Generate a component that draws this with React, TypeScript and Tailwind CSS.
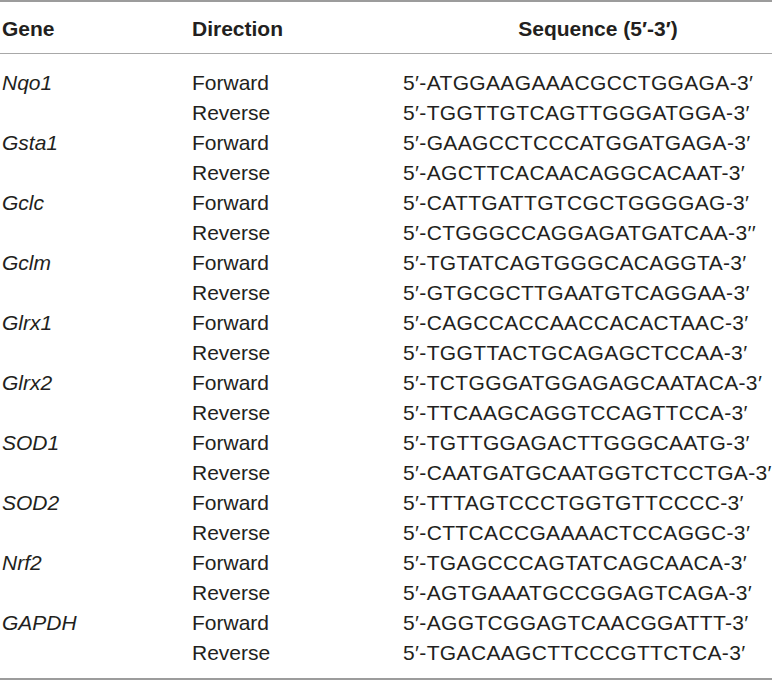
const rows: [string, string, string][] = [
	['Nqo1', '5′-ATGGAAGAAACGCCTGGAGA-3′', '5′-TGGTTGTCAGTTGGGATGGA-3′'],
	['Gsta1', '5′-GAAGCCTCCCATGGATGAGA-3′', '5′-AGCTTCACAACAGGCACAAT-3′'],
	['Gclc', '5′-CATTGATTGTCGCTGGGGAG-3′', '5′-CTGGGCCAGGAGATGATCAA-3′′'],
	['Gclm', '5′-TGTATCAGTGGGCACAGGTA-3′', '5′-GTGCGCTTGAATGTCAGGAA-3′'],
	['Glrx1', '5′-CAGCCACCAACCACACTAAC-3′', '5′-TGGTTACTGCAGAGCTCCAA-3′'],
	['Glrx2', '5′-TCTGGGATGGAGAGCAATACA-3′', '5′-TTCAAGCAGGTCCAGTTCCA-3′'],
	['SOD1', '5′-TGTTGGAGACTTGGGCAATG-3′', '5′-CAATGATGCAATGGTCTCCTGA-3′'],
	['SOD2', '5′-TTTAGTCCCTGGTGTTCCCC-3′', '5′-CTTCACCGAAAACTCCAGGC-3′'],
	['Nrf2', '5′-TGAGCCCAGTATCAGCAACA-3′', '5′-AGTGAAATGCCGGAGTCAGA-3′'],
	['GAPDH', '5′-AGGTCGGAGTCAACGGATTT-3′', '5′-TGACAAGCTTCCCGTTCTCA-3′'],
]

export default function App() {
	return (
		<div className="h-[681px] w-[772px] bg-white font-['Liberation_Sans',Arial,sans-serif] text-[21px] text-[#231f20]">
			<div className="border-t-2 border-b-2 border-[#9c9c9c]">
				<div className="grid h-[52px] grid-cols-[190px_211px_1fr] items-center border-b border-[#a8a8a8] pt-[3px] pl-[2px] font-bold">
					<div>Gene</div>
					<div>Direction</div>
					<div className="pl-[21px] text-center">Sequence (5′-3′)</div>
				</div>
				<div className="pt-[13px] pb-[11px]">
					{rows.map(([gene, fwd, rev]) => (
						<div key={gene}>
							<div className="grid h-[30px] grid-cols-[190px_211px_1fr] items-center pl-[2px]">
								<div className="italic">{gene}</div>
								<div>Forward</div>
								<div className="tracking-[0.35px]">{fwd}</div>
							</div>
							<div className="grid h-[30px] grid-cols-[190px_211px_1fr] items-center pl-[2px]">
								<div></div>
								<div>Reverse</div>
								<div className="tracking-[0.35px]">{rev}</div>
							</div>
						</div>
					))}
				</div>
			</div>
		</div>
	)
}
